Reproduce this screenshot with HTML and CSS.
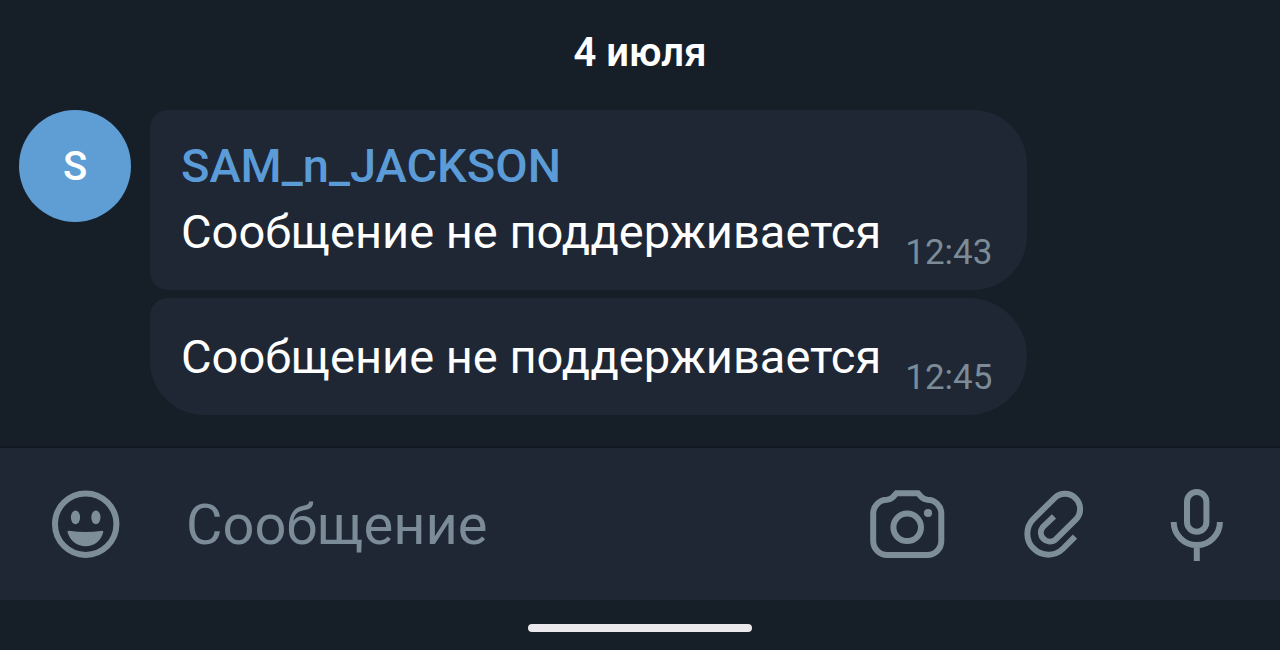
FILE: index.html
```html
<!DOCTYPE html>
<html lang="ru">
<head>
<meta charset="utf-8">
<meta name="viewport" content="width=device-width, initial-scale=1">
<title>Чат</title>
<link rel="stylesheet" href="styles.css">
</head>
<body>
<main class="chat">
  <h1 class="date">4 июля</h1>
  <section class="group">
    <div class="avatar" aria-hidden="true">S</div>
    <div class="messages">
      <article class="bubble bubble-first">
        <h2 class="sender">SAM_n_JACKSON</h2>
        <div class="line"><p class="text">Сообщение не поддерживается</p><time class="time">12:43</time></div>
      </article>
      <article class="bubble bubble-last">
        <div class="line"><p class="text">Сообщение не поддерживается</p><time class="time">12:45</time></div>
      </article>
    </div>
  </section>
</main>
<form class="composer">
  <button class="icon-button" type="button" aria-label="Эмодзи">
    <svg class="icon" viewBox="0 0 80 80">
      <circle class="stroke" cx="39.7" cy="40.2" r="30.7"/>
      <ellipse class="fill" cx="29.5" cy="33.3" rx="4.6" ry="6.9"/>
      <ellipse class="fill" cx="49.9" cy="33.3" rx="4.6" ry="6.9"/>
      <path class="fill" d="M23 46.7Q40 49.3 56 46.7Q57.8 46.7 57.2 48.6C54.5 57.5 48 62.3 39.7 62.3S24.5 57.5 21.6 48.6Q21 46.5 23 46.7Z"/>
    </svg>
  </button>
  <input class="field" type="text" placeholder="Сообщение" aria-label="Сообщение">
  <div class="actions">
    <button class="icon-button" type="button" aria-label="Камера">
      <svg class="icon" viewBox="0 0 80 80">
        <path class="stroke" d="M20 15.7Q23.5 15.3 25.5 13.5L29.5 9.3H51L55 13.5Q57 15.3 60.5 15.7A14 14 0 0 1 74.3 29.7V57A14 14 0 0 1 60.3 71H20.2A14 14 0 0 1 6.2 57V29.7A14 14 0 0 1 20 15.7Z"/>
        <circle class="stroke" cx="40.2" cy="43.3" r="13.8"/>
        <circle class="fill" cx="61" cy="29" r="4.1"/>
      </svg>
    </button>
    <button class="icon-button" type="button" aria-label="Прикрепить файл">
      <svg class="icon" viewBox="-2 0 80 80">
        <path class="stroke" d="M61 52.7L49.2 64.5A21 21 0 0 1 19.5 34.8L40.3 14.3A15.1 15.1 0 0 1 61.7 35.7L41.3 55.8A9 9 0 0 1 28.7 43.2L40 32.3"/>
      </svg>
    </button>
    <button class="icon-button" type="button" aria-label="Голосовое сообщение">
      <svg class="icon" viewBox="0 0 80 80">
        <rect class="stroke" x="30" y="8" width="19.4" height="39.7" rx="9.7"/>
        <path class="stroke" d="M16.7 38A23.1 23.1 0 0 0 62.9 38M39.8 61V77"/>
      </svg>
    </button>
  </div>
</form>
<footer class="system-bar"><div class="handle"></div></footer>
</body>
</html>
```
FILE: styles.css
```css
* { box-sizing: border-box; }

body {
  margin: 0;
  min-height: 100vh;
  display: flex;
  flex-direction: column;
  background: #161e27;
  color: #fff;
  font-family: Roboto, "Noto Sans", sans-serif;
}

h1, h2, p { margin: 0; }

.chat {
  flex: 1;
  padding: 29px 19px;
}

.date {
  margin-bottom: 33px;
  font-size: 40px;
  line-height: 48px;
  font-weight: 600;
  text-align: center;
}

.group {
  display: flex;
  align-items: flex-start;
  gap: 19px;
}

.avatar {
  flex: none;
  display: grid;
  place-items: center;
  width: 112px;
  height: 112px;
  border-radius: 50%;
  background: #5f9dd5;
  font-size: 40px;
  font-weight: 500;
}

.messages {
  display: flex;
  flex-direction: column;
  gap: 8px;
}

.bubble {
  padding: 28px 35px 21px 31px;
  background: #1e2733;
}

.bubble-first { border-radius: 18px 54px 54px 18px; }

.bubble-last {
  padding-top: 31px;
  border-radius: 18px 58px 58px 54px;
}

.sender {
  margin-bottom: 10px;
  color: #5b9bd8;
  font-size: 47px;
  line-height: 56px;
  font-weight: 500;
}

.line {
  display: flex;
  align-items: flex-end;
  gap: 24px;
}

.text {
  padding-bottom: 10px;
  font-size: 47px;
  line-height: 55px;
}

.time {
  color: #7b8b97;
  font-size: 35px;
  line-height: 32px;
}

.composer {
  display: flex;
  align-items: center;
  gap: 60px;
  padding: 36px 43px 36px 46px;
  border-top: 2px solid #111820;
  background: #1e2733;
}

.icon-button {
  flex: none;
  padding: 0;
  border: 0;
  background: none;
  color: #7d8e99;
  cursor: pointer;
}

.icon {
  display: block;
  width: 80px;
  height: 80px;
}

.stroke {
  fill: none;
  stroke: currentColor;
  stroke-width: 6;
}

.fill { fill: currentColor; }

.field {
  flex: 1;
  min-width: 0;
  padding: 2px 0 0;
  border: 0;
  outline: 0;
  background: none;
  color: #fff;
  font: 56px/64px Roboto, "Noto Sans", sans-serif;
}

.field::placeholder {
  color: #7b8b97;
  opacity: 1;
}

.actions {
  display: flex;
  gap: 65px;
}

.system-bar {
  display: flex;
  justify-content: center;
  padding: 24px 0 18px;
}

.handle {
  width: 224px;
  height: 8px;
  border-radius: 4px;
  background: #ebe9eb;
}
```
